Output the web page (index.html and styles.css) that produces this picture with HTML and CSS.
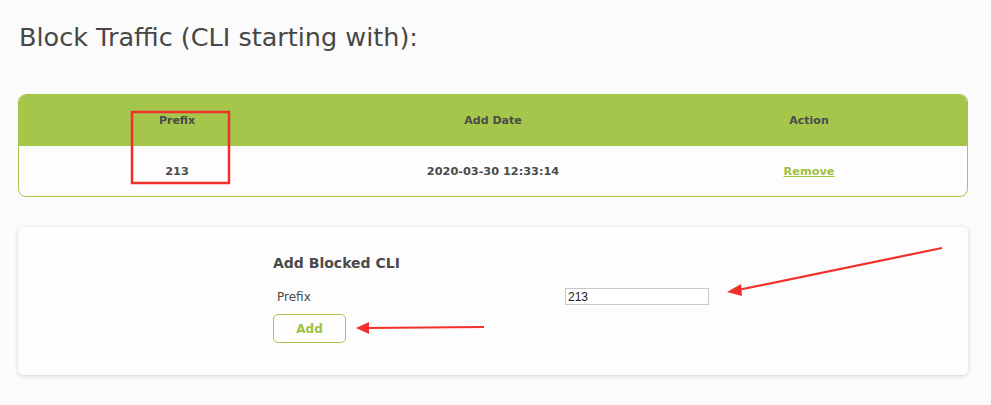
FILE: index.html
```html
<!DOCTYPE html>
<html lang="en">
<head>
<meta charset="utf-8">
<title>Block Traffic</title>
<link rel="stylesheet" href="styles.css">
</head>
<body>
<main class="page">
  <h1 class="title">Block Traffic (CLI starting with):</h1>

  <section class="table-card">
    <table class="data-table">
      <thead>
        <tr><th>Prefix</th><th>Add Date</th><th>Action</th></tr>
      </thead>
      <tbody>
        <tr><td>213</td><td>2020-03-30 12:33:14</td><td><a class="remove" href="#">Remove</a></td></tr>
      </tbody>
    </table>
  </section>

  <section class="form-card">
    <form class="add-form">
      <h3 class="form-title">Add Blocked CLI</h3>
      <div class="form-row">
        <label class="form-label" for="prefix">Prefix</label>
        <input class="form-input" id="prefix" type="text" value="213">
      </div>
      <button class="add-btn" type="button">Add</button>
    </form>
  </section>

  <svg class="annotations" width="991" height="405" viewBox="0 0 991 405">
    <rect x="132" y="112" width="97" height="71" fill="none" stroke="#f2302a" stroke-width="2.5"/>
    <line x1="942" y1="248" x2="738" y2="290" stroke="#f2302a" stroke-width="2.2"/>
    <polygon points="727,292 741,284 742,296" fill="#f2302a"/>
    <line x1="484" y1="327" x2="368" y2="328" stroke="#f2302a" stroke-width="2.2"/>
    <polygon points="356,328 369,322 369,334" fill="#f2302a"/>
  </svg>
</main>
</body>
</html>
```

FILE: styles.css
```css
html, body {
  margin: 0;
  padding: 0;
  background: #fbfbfb;
}

.page {
  position: relative;
  width: 991px;
  height: 405px;
  box-sizing: border-box;
  padding: 23px 23px 0 18px;
  font-family: "DejaVu Sans", Verdana, sans-serif;
  color: #4a4a4a;
}

.title {
  margin: 0 0 0 1px;
  font-size: 25.5px;
  font-weight: normal;
  line-height: 28px;
  color: #474747;
}

.table-card {
  margin-top: 43px;
  border: 1px solid #a4c64a;
  border-radius: 8px;
  overflow: hidden;
  background: #fdfdfd;
}

.data-table {
  width: 100%;
  border-collapse: collapse;
  table-layout: fixed;
}

.data-table th {
  background: #a4c64a;
  height: 51px;
  padding: 0;
  font-size: 11px;
  font-weight: bold;
  color: #4a4a4a;
  text-align: center;
}

.data-table td {
  height: 50px;
  padding: 0;
  font-size: 11.3px;
  font-weight: bold;
  color: #4a4a4a;
  text-align: center;
}

.remove {
  color: #9dc23f;
  text-decoration: underline;
}

.form-card {
  margin-top: 30px;
  height: 148px;
  box-sizing: border-box;
  background: #fdfdfd;
  border-radius: 5px;
  box-shadow: 0 1px 4px rgba(0, 0, 0, 0.16);
  padding-top: 28px;
}

.add-form {
  width: 440px;
  margin: 0 auto;
}

.form-title {
  margin: 0;
  font-size: 14px;
  font-weight: bold;
  line-height: 17px;
  color: #4a4a4a;
}

.form-row {
  display: grid;
  grid-template-columns: 1fr 144px;
  align-items: center;
  margin-top: 16px;
  padding: 0 4px;
}

.form-label {
  font-size: 12px;
  color: #4a4a4a;
}

.form-input {
  box-sizing: border-box;
  width: 144px;
  height: 17px;
  margin: 0;
  padding: 0 2px;
  border: 1px solid #c8c8c8;
  background: #fff;
  font-family: "Liberation Sans", Arial, sans-serif;
  font-size: 12px;
  color: #222;
}

.add-btn {
  display: block;
  margin-top: 9px;
  width: 73px;
  height: 29px;
  box-sizing: border-box;
  border: 1px solid #a4c64a;
  border-radius: 5px;
  background: #fdfdfd;
  font-family: "DejaVu Sans", Verdana, sans-serif;
  font-size: 12px;
  font-weight: bold;
  color: #9dc23f;
  padding: 0;
}

.annotations {
  position: absolute;
  left: 0;
  top: 0;
  pointer-events: none;
}
```
